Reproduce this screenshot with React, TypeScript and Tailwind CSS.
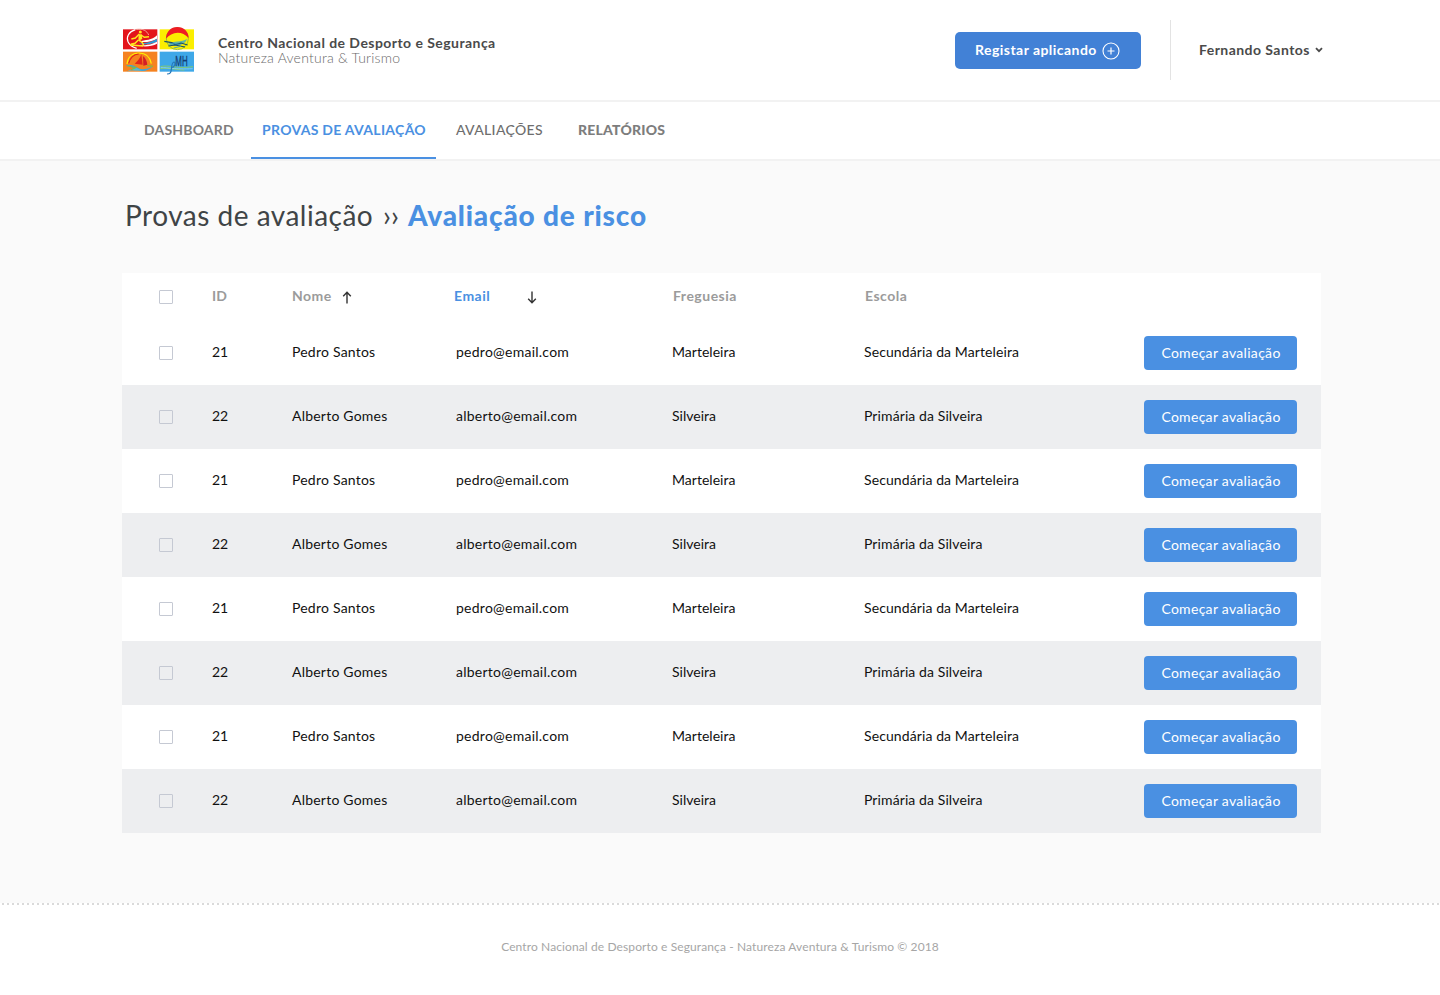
type Row = {
  id: number;
  name: string;
  email: string;
  parish: string;
  school: string;
};

const pedro: Row = {
  id: 21,
  name: "Pedro Santos",
  email: "pedro@email.com",
  parish: "Marteleira",
  school: "Secundária da Marteleira",
};

const alberto: Row = {
  id: 22,
  name: "Alberto Gomes",
  email: "alberto@email.com",
  parish: "Silveira",
  school: "Primária da Silveira",
};

const rows: Row[] = [pedro, alberto, pedro, alberto, pedro, alberto, pedro, alberto];

const columns =
  "grid grid-cols-[53px_80px_164px_216px_192px_1fr_153px] items-center pl-[37px] pr-6";

function Logo() {
  return (
    <svg width="72" height="50" viewBox="0 0 216 150" fill="none" className="overflow-visible" aria-label="CNDS">
      {/* red tile: skier */}
      <rect x="0" y="10" width="103" height="60" fill="#e3141b" />
      <path d="M37 11C17 17 9 33 15 47c4 9 13 16 26 20" stroke="#fff" strokeWidth="3.5" />
      <path d="M40 10c18-3 32 4 37 17" stroke="#f7b7a8" strokeWidth="2.5" />
      <path d="M102 28C86 44 68 41 48 47c18 3 38 0 54-9z" fill="#fff" />
      <path d="M102 38C84 50 66 50 46 53c18 4 38 2 56-6z" fill="#2c9ad6" />
      <path d="M102 47C84 57 64 58 44 58c20 6 42 3 58-5z" fill="#fff" />
      <circle cx="52" cy="18" r="4.5" fill="#ffe51e" />
      <path d="M47 25l9 0 2 14-12 5z" fill="#ffe51e" />
      <path d="M49 24l-12 12-12 3M54 27l10 7 14-2M48 42l10 8 4 8M46 42l-10 10-13 3M22 57l38 3" stroke="#ffe51e" strokeWidth="4.5" />
      {/* yellow tile: sun and water */}
      <rect x="110" y="10" width="103" height="60" fill="#fbee00" />
      <circle cx="163" cy="38" r="33" stroke="#8ab83a" strokeWidth="2.5" />
      <path d="M129 38C129 17 144 3 163 3s34 14 34 33c-10-11-21-16-33-16-14 0-26 7-35 18z" fill="#ee1c24" />
      <path d="M134 55c18-14 42-4 58-17-4 18-30 26-58 17z" fill="#63b5a0" />
      <path d="M124 46l22 4 12 6 16-5 20 6M136 60l20-3 30 6" stroke="#174f68" strokeWidth="3.5" />
      <path d="M142 52l30 3M152 66l22-5" stroke="#3b98c4" strokeWidth="2.5" />
      {/* orange tile: sail */}
      <rect x="0" y="77" width="103" height="60" fill="#f58220" />
      <path d="M12 114c2-21 16-33 36-33 19 0 33 11 37 32" stroke="#fff200" strokeWidth="3.5" />
      <path d="M17 112c5-18 16-27 30-28" stroke="#e1251b" strokeWidth="3.5" />
      <path d="M55 85c-4 13-12 21-20 28l24 3z" fill="#e1251b" />
      <path d="M60 90c8 7 12 16 13 26l-12 3z" fill="#d21f26" />
      <path d="M8 119c16-5 26-1 36 6 12 8 28 6 46-5-14 16-34 19-48 11-11-6-22-10-34-12z" fill="#3aa5dc" />
      <path d="M10 137c20-8 30 0 46-4l-24-11c4 7-10 8-22 15z" fill="#56b8d8" />
      <path d="M14 120l24 5-14 6M72 118l18 3" stroke="#8ab83a" strokeWidth="3.5" />
      {/* blue tile: monogram */}
      <rect x="110" y="77" width="103" height="60" fill="#3ea8e8" />
      <path d="M112 122c24-7 50 8 98 0M112 128c30-4 48 4 72 4" stroke="#8fd05a" strokeWidth="2.5" />
      <path d="M113 125c24-1 40 6 96 3" stroke="#a4dcf8" strokeWidth="2" />
      <path d="M132 144c10 0 12-4 13-14s2-22 8-22c7 2 1 18-9 16" stroke="#2476b8" strokeWidth="3.5" />
      <text
        x="157"
        y="119"
        fill="#153e74"
        fontFamily="Liberation Sans, sans-serif"
        fontSize="46"
        textLength="37"
        lengthAdjust="spacingAndGlyphs"
        stroke="#153e74"
        strokeWidth="1"
      >MH</text>
    </svg>
  );
}

function SortArrow({ down = false }: { down?: boolean }) {
  return (
    <svg
      width="10"
      height="13"
      viewBox="0 0 10 13"
      fill="none"
      stroke="#333"
      strokeWidth="1.4"
      className={down ? "rotate-180" : ""}
    >
      <path d="M5 12.5V1.5M1.2 5.2 5 1.2l3.8 4" />
    </svg>
  );
}

function Checkbox() {
  return <span className="block size-[14px] rounded-[1px] border border-[#c5c9d3]" />;
}

export default function App() {
  return (
    <div className="flex h-[995px] w-[1440px] flex-col bg-[#fafafa] font-['Lato',sans-serif] text-sm">
      <header className="flex h-[102px] items-start border-b-2 border-[#f2f2f2] bg-white pl-[123px] pr-[117px]">
        <div className="mt-[26px]">
          <Logo />
        </div>
        <div className="ml-[23px] mt-[35px] leading-[15px]">
          <p className="font-bold tracking-[0.45px] text-[#4a4a4a]">
            Centro Nacional de Desporto e Segurança
          </p>
          <p className="font-light tracking-[0.22px] text-[#6a6a6a]">Natureza Aventura &amp; Turismo</p>
        </div>
        <button className="ml-auto mt-8 flex h-[37px] w-[186px] items-center rounded-[5px] bg-[#4281d6] pl-5 font-bold tracking-[0.46px] text-white">
          <span className="whitespace-nowrap pb-0.5">Registar aplicando</span>
          <svg className="ml-[5px]" width="18" height="18" viewBox="0 0 18 18" fill="none" stroke="#fff">
            <circle cx="9" cy="9" r="8" strokeWidth="1.1" />
            <path d="M9 5.5v7M5.5 9h7" strokeWidth="1.2" />
          </svg>
        </button>
        <div className="ml-[29px] mt-5 flex h-[60px] w-[153px] items-center border-l border-[#e3e3e3] pl-[28px]">
          <span className="whitespace-nowrap font-bold tracking-[0.45px] text-[#4a4a4a]">Fernando Santos</span>
          <svg className="ml-[5px]" width="8" height="6" viewBox="0 0 8 6" fill="none" stroke="#4a4a4a" strokeWidth="1.8">
            <path d="M1 1.2 4 4.2l3-3" />
          </svg>
        </div>
      </header>

      <nav className="flex h-[59px] border-b-2 border-[#f2f2f2] bg-white pl-[144px] text-[#7d7d7d]">
        <a className="w-[107px] pt-[18px] font-bold leading-5 tracking-[0.18px]">DASHBOARD</a>
        <a className="w-[185px] border-b-2 border-[#4a90e2] pl-[11px] pt-[18px] font-bold leading-5 tracking-[0.3px] text-[#4a90e2]">
          PROVAS DE AVALIAÇÃO
        </a>
        <a className="ml-5 w-[122px] pt-[18px] font-medium leading-5 tracking-[0.33px] text-[#6e6e6e]">AVALIAÇÕES</a>
        <a className="pt-[18px] font-black leading-5 tracking-[0.2px]">RELATÓRIOS</a>
      </nav>

      <main className="flex-1 pl-[122px]">
        <h1 className="flex pl-[3px] pt-[34px] text-[28px] leading-[40px] text-[#3f4446]">
          <span className="w-[258px] tracking-[0.5px]">Provas de avaliação</span>
          <span className="w-[25px]">››</span>
          <span className="font-black tracking-[0.82px] text-[#4a90e2]">Avaliação de risco</span>
        </h1>

        <section className="mt-[38px] w-[1199px] bg-white">
          <div className={`${columns} h-12 font-bold tracking-[0.5px] text-[#9b9b9b]`}>
            <Checkbox />
            <span className="pb-0.5 tracking-normal">ID</span>
            <span className="flex items-center">
              <span className="w-[50px] pb-0.5">Nome</span>
              <SortArrow />
            </span>
            <span className="-ml-0.5 flex items-center text-[#4a90e2]">
              <span className="w-[73px] pb-0.5">Email</span>
              <SortArrow down />
            </span>
            <span className="pb-0.5 pl-px">Freguesia</span>
            <span className="pb-0.5 pl-px">Escola</span>
            <span />
          </div>
          {rows.map((row, i) => (
            <div key={i} className={`${columns} h-16 text-[#111] ${i % 2 ? "bg-[#edeef0]" : "bg-white"}`}>
              <Checkbox />
              <span className="pb-0.5 tracking-[-0.2px]">{row.id}</span>
              <span className="pb-0.5 tracking-[0.22px]">{row.name}</span>
              <span className="pb-0.5 tracking-[0.25px]">{row.email}</span>
              <span className="pb-0.5 tracking-[0.02px]">{row.parish}</span>
              <span className="pb-0.5 tracking-[0.1px]">{row.school}</span>
              <button className="h-[34px] rounded-[4px] bg-[#4a90e2] pl-px tracking-[0.3px] text-white">
                Começar avaliação
              </button>
            </div>
          ))}
        </section>
      </main>

      <footer className="h-[92px] bg-white">
        <div className="h-0.5 bg-[repeating-linear-gradient(90deg,#fff_0_2px,#dadada_2px_4px,#fff_4px_5px)]" />
        <p className="pt-8 text-center text-xs leading-5 tracking-[0.11px] text-[#a6a6a6]">
          Centro Nacional de Desporto e Segurança - Natureza Aventura &amp; Turismo © 2018
        </p>
      </footer>
    </div>
  );
}
